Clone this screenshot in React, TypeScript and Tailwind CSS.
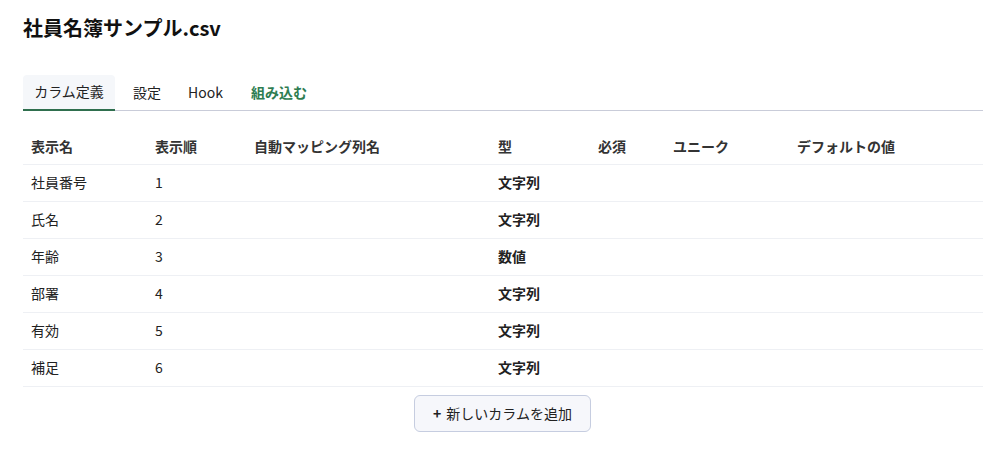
import React from 'react';

const columns = [
  { label: '表示名', w: 'w-[124px]' },
  { label: '表示順', w: 'w-[99px]' },
  { label: '自動マッピング列名', w: 'w-[244px]' },
  { label: '型', w: 'w-[100px]' },
  { label: '必須', w: 'w-[75px]' },
  { label: 'ユニーク', w: 'w-[124px]' },
  { label: 'デフォルトの値', w: '' },
];

const rows = [
  { name: '社員番号', order: 1, type: '文字列' },
  { name: '氏名', order: 2, type: '文字列' },
  { name: '年齢', order: 3, type: '数値' },
  { name: '部署', order: 4, type: '文字列' },
  { name: '有効', order: 5, type: '文字列' },
  { name: '補足', order: 6, type: '文字列' },
];

const App: React.FC = () => {
  return (
    <div
      className="min-h-screen bg-white text-[#1f2328] pl-[23px] pt-[14px]"
      style={{ fontFamily: '"Noto Sans CJK JP", "Liberation Sans", sans-serif' }}
    >
      <div className="w-[960px]">
        <h1 className="text-[20px] font-bold leading-[28px] text-[#111]">社員名簿サンプル.csv</h1>

        {/* Tabs */}
        <div className="mt-[32px] flex items-center border-b border-[#c9ccd9]">
          <button className="h-[36px] w-[92px] text-[14px] bg-[#f5f7fa] rounded-t-[4px] border-b-2 border-[#2f6f4e] -mb-px text-[#222]">
            カラム定義
          </button>
          <button className="ml-[18px] h-[36px] text-[14px] text-[#222]">設定</button>
          <button className="ml-[27px] h-[36px] text-[14px] text-[#222]">Hook</button>
          <button className="ml-[28px] h-[36px] text-[14px] font-semibold text-[#2e7d52]">組み込む</button>
        </div>

        {/* Table */}
        <table className="mt-[18px] w-full border-collapse text-[14px] text-left">
          <thead>
            <tr className="h-[35px] border-b border-[#eef0f4]">
              {columns.map((c) => (
                <th key={c.label} className={`${c.w} pl-[8px] font-bold text-[#333]`}>
                  {c.label}
                </th>
              ))}
            </tr>
          </thead>
          <tbody>
            {rows.map((r) => (
              <tr key={r.name} className="h-[37px] border-b border-[#eef0f4]">
                <td className="pl-[8px] text-[#222]">{r.name}</td>
                <td className="pl-[8px] text-[#222]">{r.order}</td>
                <td className="pl-[8px]"></td>
                <td className="pl-[8px] font-bold text-[#222]">{r.type}</td>
                <td className="pl-[8px]"></td>
                <td className="pl-[8px]"></td>
                <td className="pl-[8px]"></td>
              </tr>
            ))}
          </tbody>
        </table>

        <div className="mt-[8px] flex justify-center">
          <button className="h-[37px] w-[177px] -ml-[1px] rounded-[6px] border border-[#c6cde0] bg-[#f6f7fb] text-[14px] text-[#222]">
            <span className="font-semibold mr-[5px]">+</span>新しいカラムを追加
          </button>
        </div>
      </div>
    </div>
  );
};

export default App;
